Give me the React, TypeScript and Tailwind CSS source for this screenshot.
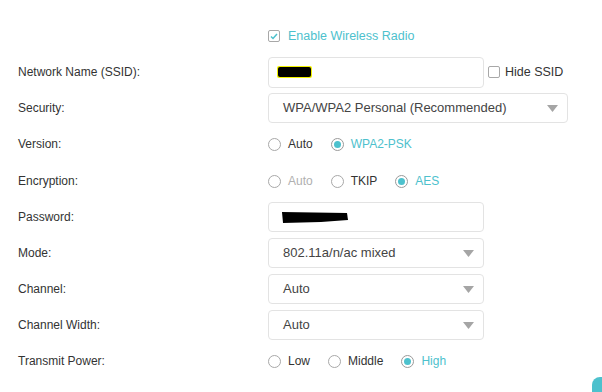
import type { ReactNode } from 'react'

const teal = 'text-[#4dc1cd]'

function Row({ label, children }: { label?: string; children: ReactNode }) {
  return (
    <div className="flex h-[30px] items-center">
      <div className="w-[250px] shrink-0 text-[12px] text-[#333]">{label}</div>
      <div className="flex items-center">{children}</div>
    </div>
  )
}

function Radio({ label, checked, disabled }: { label: string; checked?: boolean; disabled?: boolean }) {
  return (
    <div className="mr-[18px] flex items-center">
      <span
        className={`flex h-[13px] w-[13px] items-center justify-center rounded-full border ${
          checked ? 'border-[#9a9a9a]' : 'border-[#a8a8a8]'
        }`}
      >
        {checked && <span className="h-[7px] w-[7px] rounded-full bg-[#4dc1cd]" />}
      </span>
      <span
        className={`ml-[7px] text-[12px] ${
          checked ? teal : disabled ? 'text-[#b0b0b0]' : 'text-[#333]'
        }`}
      >
        {label}
      </span>
    </div>
  )
}

function Select({ value, wide }: { value: string; wide?: boolean }) {
  return (
    <div
      className={`flex h-[30px] items-center justify-between rounded-[4px] border border-[#e3e3e3] pl-[14px] pr-[9px] ${
        wide ? 'w-[300px]' : 'w-[216px]'
      }`}
    >
      <span className="text-[13px] text-[#444]">{value}</span>
      <svg width="11" height="7" viewBox="0 0 11 7">
        <path d="M0 0h11L5.5 7z" fill="#a5a5a5" />
      </svg>
    </div>
  )
}

export default function App() {
  return (
    <div
      className="relative h-[392px] w-[602px] overflow-hidden bg-white pl-[18px] pt-[21px]"
      style={{ fontFamily: '"Liberation Sans", Arial, sans-serif' }}
    >
      <div className="flex flex-col gap-[6px]">
        <Row>
          <div className="flex items-center">
            <span className="flex h-[12px] w-[12px] items-center justify-center rounded-[2px] border border-[#a8a8a8]">
              <svg width="8" height="7" viewBox="0 0 8 7">
                <path d="M1 3.5l2 2L7 1" stroke="#4dc1cd" strokeWidth="1.5" fill="none" />
              </svg>
            </span>
            <span className={`ml-[8px] text-[12.5px] ${teal}`}>Enable Wireless Radio</span>
          </div>
        </Row>
        <Row label="Network Name (SSID):">
          <div className="flex h-[31px] w-[216px] items-center rounded-[4px] border border-[#e3e3e3] pl-[8px]">
            <span className="h-[12px] w-[35px] rounded-[2px] bg-[#f2f200] p-[1px]">
              <span className="block h-full w-full rounded-[2px] bg-black" />
            </span>
          </div>
          <span className="ml-[4px] h-[12px] w-[12px] rounded-[2px] border border-[#a8a8a8]" />
          <span className="ml-[5px] text-[12.5px] text-[#333]">Hide SSID</span>
        </Row>
        <Row label="Security:">
          <Select value="WPA/WPA2 Personal (Recommended)" wide />
        </Row>
        <Row label="Version:">
          <Radio label="Auto" />
          <Radio label="WPA2-PSK" checked />
        </Row>
        <div className="pt-[1px]">
          <Row label="Encryption:">
            <Radio label="Auto" disabled />
            <Radio label="TKIP" />
            <Radio label="AES" checked />
          </Row>
        </div>
        <Row label="Password:">
          <div className="flex h-[30px] w-[216px] items-center rounded-[4px] border border-[#e3e3e3] pl-[12px]">
            <svg width="68" height="14" viewBox="0 0 68 14">
              <path d="M1 2 L66 3 L67 10 L40 12 L2 13 Z" fill="#000" />
            </svg>
          </div>
        </Row>
        <Row label="Mode:">
          <Select value="802.11a/n/ac mixed" />
        </Row>
        <Row label="Channel:">
          <Select value="Auto" />
        </Row>
        <Row label="Channel Width:">
          <Select value="Auto" />
        </Row>
        <Row label="Transmit Power:">
          <Radio label="Low" />
          <Radio label="Middle" />
          <Radio label="High" checked />
        </Row>
      </div>
      <div className="absolute left-[592px] top-[377px] h-[30px] w-[40px] rounded-tl-[8px] bg-[#4dc1cd]" />
    </div>
  )
}
